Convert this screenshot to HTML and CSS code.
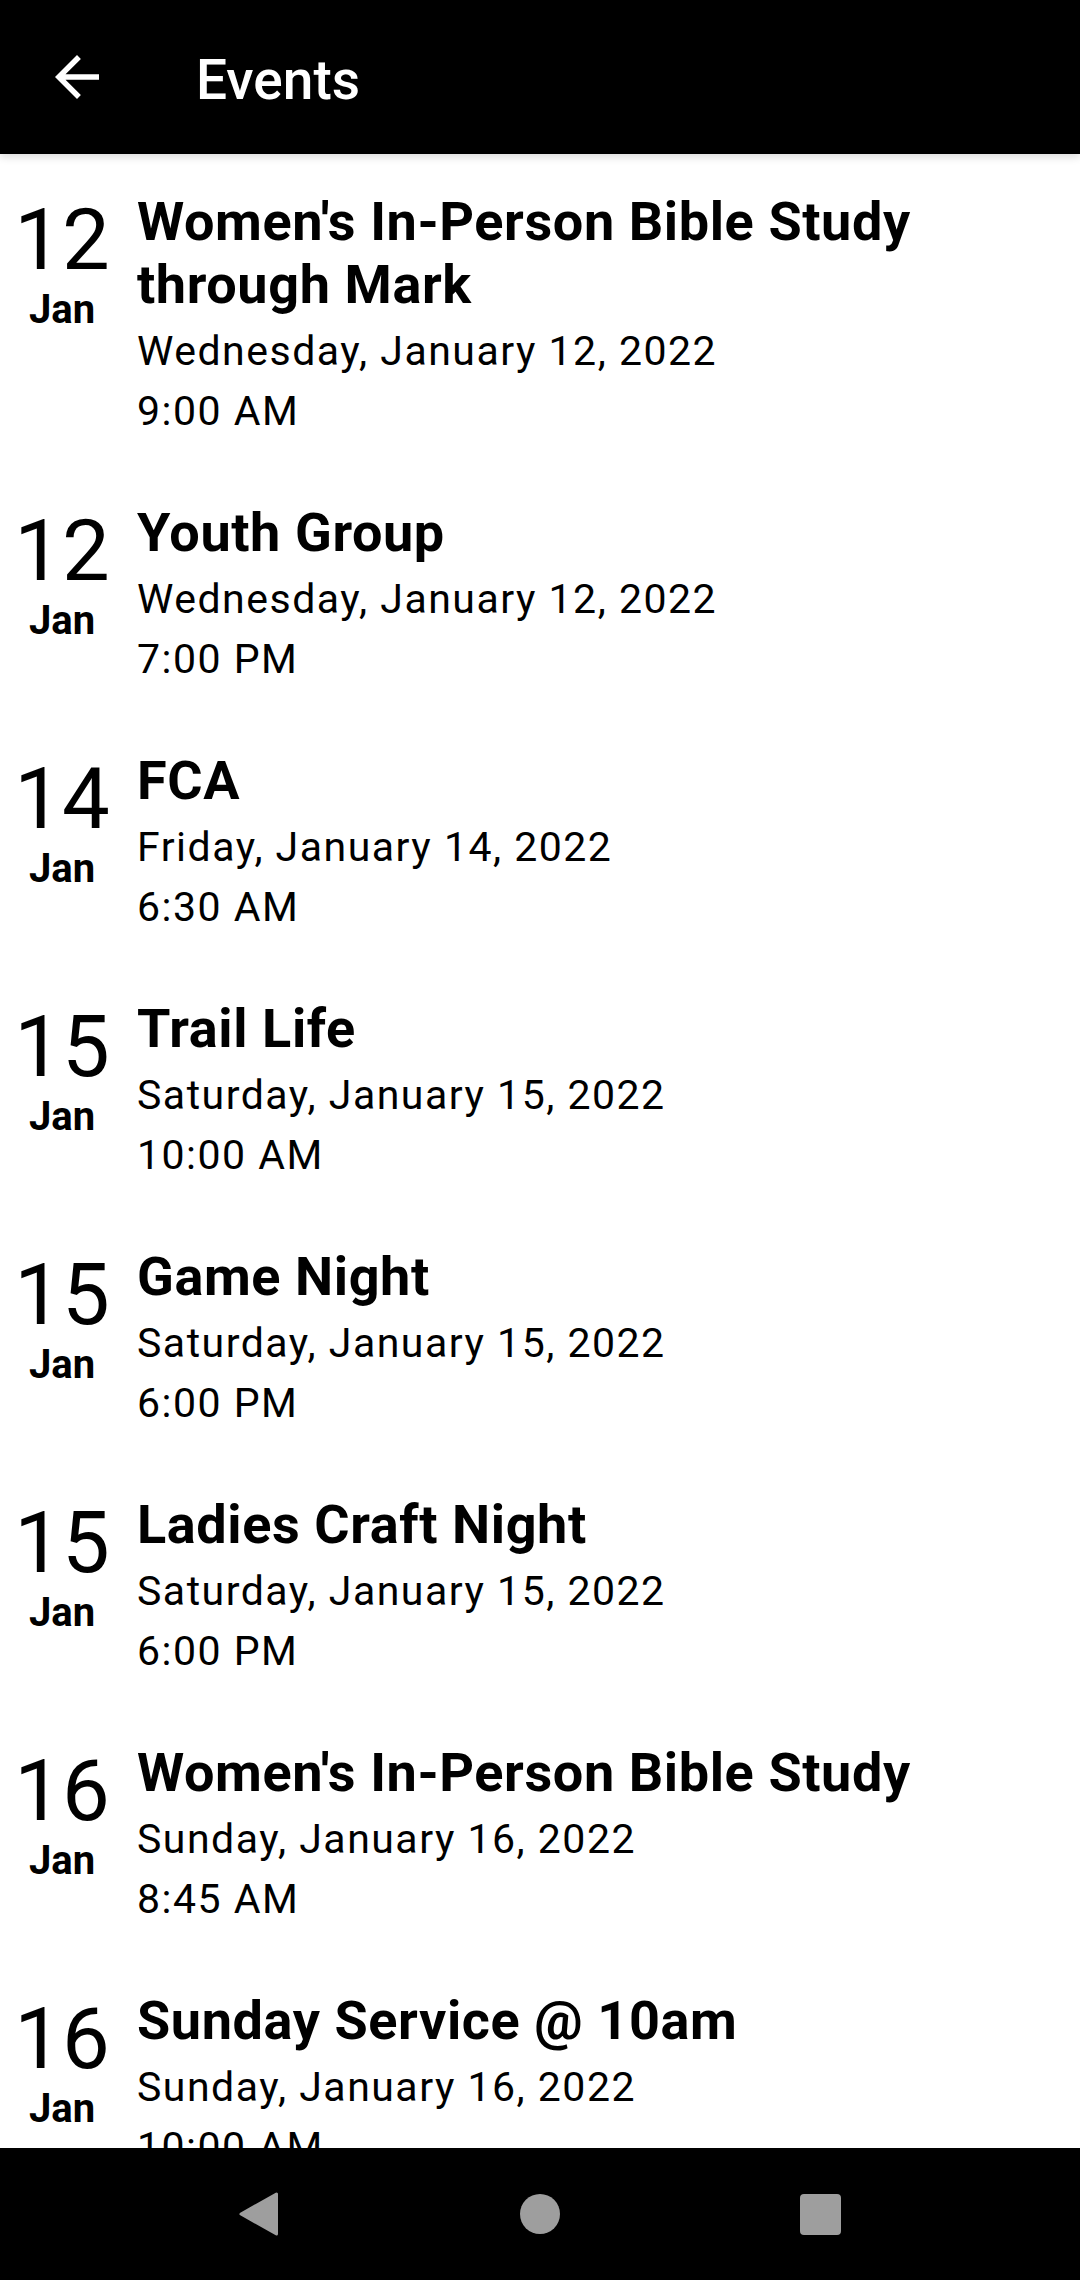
FILE: index.html
```html
<!DOCTYPE html>
<html lang="en">
<head>
  <meta charset="UTF-8">
  <meta name="viewport" content="width=device-width, initial-scale=1.0">
  <title>Events</title>
  <link rel="stylesheet" href="styles.css">
</head>
<body>
  <div class="screen">
    <header class="toolbar">
      <svg class="back" viewBox="0 0 24 24" width="66" height="66">
        <path d="M20 11H7.83l5.59-5.59L12 4l-8 8 8 8 1.41-1.41L7.83 13H20v-2z" fill="#fff"/>
      </svg>
      <h1>Events</h1>
    </header>

    <main class="events">
      <div class="event">
        <div class="day"><div class="day-num">12</div><div class="day-month">Jan</div></div>
        <div class="info">
          <h2 class="title">Women's In-Person Bible Study through Mark</h2>
          <div class="meta"><div>Wednesday, January 12, 2022</div><div>9:00 AM</div></div>
        </div>
      </div>
      <div class="event">
        <div class="day"><div class="day-num">12</div><div class="day-month">Jan</div></div>
        <div class="info">
          <h2 class="title">Youth Group</h2>
          <div class="meta"><div>Wednesday, January 12, 2022</div><div>7:00 PM</div></div>
        </div>
      </div>
      <div class="event">
        <div class="day"><div class="day-num">14</div><div class="day-month">Jan</div></div>
        <div class="info">
          <h2 class="title">FCA</h2>
          <div class="meta"><div>Friday, January 14, 2022</div><div>6:30 AM</div></div>
        </div>
      </div>
      <div class="event">
        <div class="day"><div class="day-num">15</div><div class="day-month">Jan</div></div>
        <div class="info">
          <h2 class="title">Trail Life</h2>
          <div class="meta"><div>Saturday, January 15, 2022</div><div>10:00 AM</div></div>
        </div>
      </div>
      <div class="event">
        <div class="day"><div class="day-num">15</div><div class="day-month">Jan</div></div>
        <div class="info">
          <h2 class="title">Game Night</h2>
          <div class="meta"><div>Saturday, January 15, 2022</div><div>6:00 PM</div></div>
        </div>
      </div>
      <div class="event">
        <div class="day"><div class="day-num">15</div><div class="day-month">Jan</div></div>
        <div class="info">
          <h2 class="title">Ladies Craft Night</h2>
          <div class="meta"><div>Saturday, January 15, 2022</div><div>6:00 PM</div></div>
        </div>
      </div>
      <div class="event">
        <div class="day"><div class="day-num">16</div><div class="day-month">Jan</div></div>
        <div class="info">
          <h2 class="title">Women's In-Person Bible Study</h2>
          <div class="meta"><div>Sunday, January 16, 2022</div><div>8:45 AM</div></div>
        </div>
      </div>
      <div class="event">
        <div class="day"><div class="day-num">16</div><div class="day-month">Jan</div></div>
        <div class="info">
          <h2 class="title">Sunday Service @ 10am</h2>
          <div class="meta"><div>Sunday, January 16, 2022</div><div>10:00 AM</div></div>
        </div>
      </div>
    </main>

    <nav class="navbar">
      <svg class="nav-back" viewBox="0 0 44 44" width="44" height="44">
        <polygon points="38.5,2 38.5,42 3,22" fill="#9e9e9e" stroke="#9e9e9e" stroke-width="3" stroke-linejoin="round"/>
      </svg>
      <div class="nav-icon"><div class="nav-home"></div></div>
      <div class="nav-icon"><div class="nav-recent"></div></div>
    </nav>
  </div>
</body>
</html>
```

FILE: styles.css
```css
* {
  box-sizing: border-box;
}
body {
  margin: 0;
  font-family: Roboto, "Noto Sans", sans-serif;
  background-color: #fff;
  color: #000;
}
.screen {
  height: 2280px;
  display: flex;
  flex-direction: column;
  overflow: hidden;
}
.toolbar {
  flex: none;
  height: 154px;
  background-color: #000;
  color: #fff;
  display: flex;
  align-items: center;
  padding-left: 44px;
  position: relative;
  z-index: 1;
  box-shadow: 0 3px 8px rgba(0, 0, 0, 0.14);
}
.back {
  flex: none;
}
.toolbar h1 {
  margin: 0 0 0 86px;
  padding-top: 6px;
  font-size: 55px;
  font-weight: 500;
}
.events {
  flex: 1;
  overflow: hidden;
  padding-top: 6px;
}
.event {
  display: flex;
  padding: 30px 40px 30px 0;
}
.day {
  flex: none;
  width: 100px;
  margin: 0 25px 0 12px;
  padding-top: 8px;
  text-align: center;
}
.day-num {
  font-size: 85px;
  font-weight: 400;
  line-height: 85px;
}
.day-month {
  margin-top: 4px;
  font-size: 40px;
  font-weight: 700;
  line-height: 46px;
}
.info {
  flex: 1;
  min-width: 0;
}
.title {
  margin: 0;
  font-size: 54px;
  font-weight: 700;
  line-height: 63px;
  letter-spacing: 0.6px;
}
.meta {
  margin-top: 5px;
  font-size: 41px;
  line-height: 60px;
  letter-spacing: 1.5px;
}
.navbar {
  flex: none;
  height: 132px;
  background-color: #000;
  display: flex;
  align-items: center;
  justify-content: center;
  gap: 236px;
}
.nav-back,
.nav-icon {
  width: 44px;
  height: 44px;
  display: flex;
  align-items: center;
  justify-content: center;
}
.nav-home {
  width: 40px;
  height: 40px;
  border-radius: 50%;
  background-color: #9e9e9e;
}
.nav-recent {
  width: 41px;
  height: 41px;
  border-radius: 4px;
  background-color: #9e9e9e;
}
```
